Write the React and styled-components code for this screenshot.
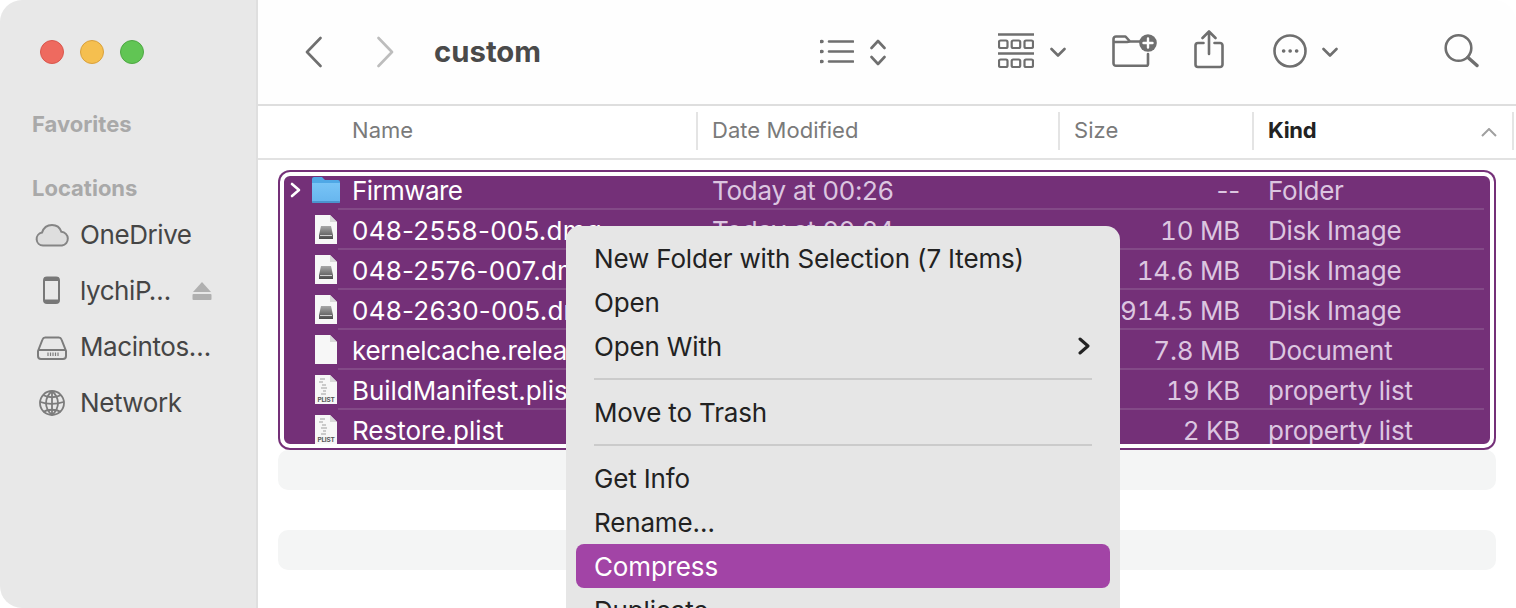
import React from "react";
import styled, { createGlobalStyle } from "styled-components";

const GlobalStyle = createGlobalStyle`
  html, body {
    margin: 0;
    padding: 0;
    background: #fff;
    overflow: hidden;
  }
  body {
    font-family: Inter, "Liberation Sans", sans-serif;
    -webkit-font-smoothing: antialiased;
  }
`;

const Window = styled.div`
  position: relative;
  display: flex;
  width: 1516px;
  height: 608px;
  overflow: hidden;
  border-radius: 22px;
  background: #fff;
`;

/* sidebar */
const Sidebar = styled.aside`
  flex: 0 0 258px;
  box-sizing: border-box;
  height: 100%;
  background: #e8e8e8;
  border-right: 2px solid #dfdfdf;
`;
const Lights = styled.div`
  display: flex;
  gap: 16px;
  padding: 40px 0 0 40px;
`;
const Light = styled.span`
  box-sizing: border-box;
  width: 24px;
  height: 24px;
  border-radius: 50%;
  background: ${(p) => p.$color};
  border: 1px solid ${(p) => p.$edge};
`;
const SectionLabel = styled.div`
  height: 28px;
  line-height: 28px;
  margin: ${(p) => p.$top}px 0 0 32px;
  font-size: 22px;
  font-weight: 700;
  color: #a9a9a9;
`;
const SideList = styled.div`
  margin-top: 5px;
`;
const SideItem = styled.div`
  display: flex;
  align-items: center;
  height: 56px;
  padding-left: 34px;
  font-size: 26px;
  letter-spacing: -0.42px;
  color: #454545;
`;
const SideIcon = styled.svg`
  flex: 0 0 36px;
  width: 36px;
  height: 32px;
  margin-right: 10px;
`;
const SideText = styled.span`
  flex: 0 0 112px;
  margin-bottom: 2px;
`;

/* main column */
const Main = styled.main`
  flex: 1;
  min-width: 0;
  display: flex;
  flex-direction: column;
`;
const Toolbar = styled.header`
  flex: 0 0 104px;
  display: flex;
  align-items: center;
  padding-left: 47px;
  background: #fefefe;
  border-bottom: 2px solid #dedede;
`;
const Title = styled.h1`
  flex: 0 0 386px;
  margin: 0 0 2px 40px;
  font-size: 29.3px;
  font-weight: 700;
  color: #4a4a4a;
`;
const ToolIcon = styled.svg`
  flex: 0 0 auto;
  height: 44px;
  margin-left: ${(p) => p.$gap || 0}px;
  fill: none;
  stroke: ${(p) => p.$color || "#6f6f6f"};
  stroke-width: 2.6;
  stroke-linecap: round;
  stroke-linejoin: round;
`;

const ColumnHeader = styled.div`
  flex: 0 0 50px;
  display: grid;
  grid-template-columns: 440px 362px 194px 260px 2px;
  align-items: center;
  padding-bottom: 2px;
  border-bottom: 2px solid #e2e2e2;
`;
const HeaderCell = styled.div`
  box-sizing: border-box;
  display: flex;
  align-items: center;
  justify-content: space-between;
  height: 38px;
  padding: 0 15px 2px ${(p) => (p.$first ? 94 : 14)}px;
  border-right: 2px solid #e4e4e4;
  font-size: 22px;
  font-weight: ${(p) => (p.$active ? 700 : 400)};
  letter-spacing: ${(p) => (p.$active ? "-0.3px" : "0.05px")};
  color: ${(p) => (p.$active ? "#222" : "#7a7a7a")};
`;
const HeaderEnd = styled.div`
  height: 38px;
`;
const SortArrow = styled.svg`
  width: 16px;
  height: 9px;
  margin-top: 4px;
  fill: none;
  stroke: #a0a0a0;
  stroke-width: 2;
`;

/* file list */
const List = styled.section`
  flex: 1;
  min-height: 0;
  padding: 10px 20px 0;
`;
const Selection = styled.div`
  position: relative;
  height: 280px;
  overflow: hidden;
  border-radius: 12px;
  background: #743078;
  &::after {
    content: "";
    position: absolute;
    inset: 0;
    border-radius: 12px;
    box-shadow: inset 0 0 0 2px #743078, inset 0 0 0 6px #fff;
    pointer-events: none;
  }
`;
const Row = styled.div`
  position: relative;
  display: grid;
  grid-template-columns: 34px 40px 360px 346px 182px 28px 1fr;
  align-items: center;
  height: 40px;
  font-size: 26px;
  letter-spacing: -0.25px;
  white-space: nowrap;
  &:not(:last-child)::after {
    content: "";
    position: absolute;
    left: 60px;
    right: 12px;
    bottom: 0;
    height: 2px;
    background: #834a87;
  }
`;
const Disclosure = styled.svg`
  justify-self: center;
  width: 12px;
  height: 16px;
  margin-left: 1px;
  fill: none;
  stroke: #fff;
  stroke-width: 2.6;
  stroke-linecap: round;
  stroke-linejoin: round;
`;
const FileIcon = styled.svg`
  display: block;
  width: 28px;
  height: 30px;
  margin-top: -2px;
`;
const Name = styled.span`
  color: #fff;
  letter-spacing: ${(p) => p.$track}px;
`;
const Meta = styled.span`
  color: #dcc6e0;
`;
const Size = styled(Meta)`
  text-align: right;
  font-variant-numeric: ${(p) => (p.$empty ? "normal" : "tabular-nums")};
`;
const Stripe = styled.div`
  height: 40px;
  border-radius: 10px;
  background: ${(p) => (p.$shaded ? "#f4f5f5" : "transparent")};
`;

/* context menu */
const Menu = styled.div`
  position: absolute;
  left: 566px;
  top: 226px;
  width: 554px;
  box-sizing: border-box;
  padding: 10px 10px 20px;
  border-radius: 14px 14px 0 0;
  background: #e6e6e6;
`;
const MenuItem = styled.div`
  display: flex;
  align-items: center;
  justify-content: space-between;
  height: 44px;
  padding: 0 20px 0 18px;
  border-radius: 8px;
  font-size: 26px;
  letter-spacing: -0.16px;
  color: ${(p) => (p.$active ? "#fff" : "#222")};
  background: ${(p) => (p.$active ? "#a244a6" : "transparent")};
`;
const MenuSeparator = styled.div`
  height: 2px;
  margin: 10px 18px;
  background: #cbcbcb;
`;
const Submenu = styled.svg`
  width: 12px;
  height: 18px;
  fill: none;
  stroke: #222;
  stroke-width: 3;
  stroke-linecap: round;
  stroke-linejoin: round;
`;

const FolderIcon = () => (
  <FileIcon viewBox="0 0 28 30">
    <defs>
      <linearGradient id="folder" x1="0" y1="0" x2="0" y2="1">
        <stop offset="0" stopColor="#78c4f6" />
        <stop offset="1" stopColor="#66b5ee" />
      </linearGradient>
    </defs>
    <path d="M0 5a2 2 0 0 1 2-2h8l3 3h13a2 2 0 0 1 2 2v4H0z" fill="#4fa8e6" />
    <path d="M0 9h28v18a2 2 0 0 1-2 2H2a2 2 0 0 1-2-2z" fill="url(#folder)" />
    <rect x="0" y="27" width="28" height="2" rx="1" fill="#4b94cf" />
  </FileIcon>
);

const Page = ({ children }) => (
  <FileIcon viewBox="0 0 28 30">
    <path d="M3 1h15l7 7v22H3z" fill="#f7f7f7" />
    <path d="M18 1v7h7z" fill="#d9d9d9" />
    {children}
  </FileIcon>
);

const DiskIcon = () => (
  <Page>
    <defs>
      <linearGradient id="disk" x1="0" y1="0" x2="0" y2="1">
        <stop offset="0" stopColor="#a8a8a8" />
        <stop offset="1" stopColor="#4b4b4b" />
      </linearGradient>
    </defs>
    <path d="M9 12h10l2 9v4H7v-4z" fill="url(#disk)" />
    <rect x="8" y="21" width="12" height="1" fill="#d0d0d0" />
  </Page>
);

const PlistIcon = () => (
  <Page>
    <path d="M8 5h5M7 8h4M10 11h4M9 14h6M11 17h3M9 20h5" stroke="#bdbdbd" strokeWidth="1.4" />
    <text x="14" y="28" textAnchor="middle" fontSize="6.5" fontWeight="700" fill="#555" fontFamily="Inter, sans-serif">
      PLIST
    </text>
  </Page>
);

const rows = [
  { name: "Firmware", track: -0.6, date: "Today at 00:26", size: "--", kind: "Folder", icon: <FolderIcon />, open: true },
  { name: "048-2558-005.dmg", track: 0.25, date: "Today at 00:24", size: "10 MB", kind: "Disk Image", icon: <DiskIcon /> },
  { name: "048-2576-007.dmg", track: 0.25, date: "Today at 00:24", size: "14.6 MB", kind: "Disk Image", icon: <DiskIcon /> },
  { name: "048-2630-005.dmg", track: 0.25, date: "Today at 00:24", size: "914.5 MB", kind: "Disk Image", icon: <DiskIcon /> },
  { name: "kernelcache.release", track: -0.25, date: "Today at 00:24", size: "7.8 MB", kind: "Document", icon: <Page /> },
  { name: "BuildManifest.plist", track: -0.05, date: "Today at 00:24", size: "19 KB", kind: "property list", icon: <PlistIcon /> },
  { name: "Restore.plist", track: 0, date: "Today at 00:24", size: "2 KB", kind: "property list", icon: <PlistIcon /> },
];

const App = () => {
  return (
    <>
      <GlobalStyle />
      <Window>
        <Sidebar>
          <Lights>
            <Light $color="#ee6a5f" $edge="#d9574d" />
            <Light $color="#f5bf4f" $edge="#d9a13d" />
            <Light $color="#61c554" $edge="#4ea843" />
          </Lights>
          <SectionLabel $top={46}>Favorites</SectionLabel>
          <SectionLabel $top={36}>Locations</SectionLabel>
          <SideList>
            <SideItem>
              <SideIcon viewBox="0 0 36 32">
                <path
                  d="M9 26.500a6.500 6.500 0 0 1-1-12.900C9.500 9 13.500 6 18 6c4.500 0 8 2.800 9.400 6.800A6.900 6.900 0 0 1 28 26.500z"
                  fill="#dedede"
                  stroke="#858585"
                  strokeWidth="2"
                />
              </SideIcon>
              <SideText>OneDrive</SideText>
            </SideItem>
            <SideItem>
              <SideIcon viewBox="0 0 36 32">
                <rect x="10" y="2.500" width="15" height="25.500" rx="3" fill="none" stroke="#787878" strokeWidth="2" />
                <rect x="10" y="2.500" width="15" height="3.500" fill="#787878" />
                <rect x="10" y="24.500" width="15" height="3.500" fill="#787878" />
              </SideIcon>
              <SideText>lychiP…</SideText>
              <svg width="20" height="18" viewBox="0 0 20 18" fill="#b0b0b0">
                <path d="M10 0 19 10H1z" />
                <rect x="0.500" y="12" width="19" height="6" rx="1" />
              </svg>
            </SideItem>
            <SideItem>
              <SideIcon viewBox="0 0 36 32">
                <path
                  d="M4 20 8.500 8.500A3 3 0 0 1 11.500 6.500h13a3 3 0 0 1 3 2L32 20v5a3 3 0 0 1-3 3H7a3 3 0 0 1-3-3zM4 19h28"
                  fill="none"
                  stroke="#7c7c7c"
                  strokeWidth="2"
                />
                <path d="M14 21.500v3.500M16.500 21.500v3.500M19 21.500v3.500M21.500 21.500v3.500M24 21.500v3.500" stroke="#7c7c7c" strokeWidth="1.200" />
              </SideIcon>
              <SideText>Macintos…</SideText>
            </SideItem>
            <SideItem>
              <SideIcon viewBox="0 0 36 32">
                <g fill="none" stroke="#7c7c7c" strokeWidth="1.800">
                  <circle cx="18" cy="16" r="12" />
                  <path d="M9 8c5 3 13 3 18 0M6.500 15c6 2.500 16 2.500 23 0M9 25c5-3 13-3 18 0" />
                  <path d="M18 4c-8 7-8 17 0 24M18 4c8 7 8 17 0 24M18 4v24" />
                </g>
              </SideIcon>
              <SideText>Network</SideText>
            </SideItem>
          </SideList>
        </Sidebar>

        <Main>
          <Toolbar>
            <ToolIcon width="17" viewBox="0 0 17 44">
              <path d="M15.500 8 2 22l13.500 14" />
            </ToolIcon>
            <ToolIcon width="17" viewBox="0 0 17 44" $gap={55} $color="#bdbdbd">
              <path d="M1.500 8 15 22 1.500 36" />
            </ToolIcon>
            <Title>custom</Title>
            <ToolIcon width="34" viewBox="0 0 34 44">
              <path d="M9 11.500h24M9 21.500h24M9 31.500h24" />
              <path d="M1.500 11.500h.5M1.500 21.500h.5M1.500 31.500h.5" strokeWidth="3.600" />
            </ToolIcon>
            <ToolIcon width="16" viewBox="0 0 16 44" $gap={16}>
              <path d="M1.500 18 8 11l6.500 7M1.500 27 8 34l6.500-7" />
            </ToolIcon>
            <ToolIcon width="36" viewBox="0 0 36 44" $gap={112}>
              <path d="M0 4.500h36M0 23.500h36" />
              <g strokeWidth="2.200">
                <rect x="1" y="10.500" width="8.500" height="7.500" rx="1.500" />
                <rect x="13.700" y="10.500" width="8.500" height="7.500" rx="1.500" />
                <rect x="26.500" y="10.500" width="8.500" height="7.500" rx="1.500" />
                <rect x="1" y="29.500" width="8.500" height="7.500" rx="1.500" />
                <rect x="13.700" y="29.500" width="8.500" height="7.500" rx="1.500" />
                <rect x="26.500" y="29.500" width="8.500" height="7.500" rx="1.500" />
              </g>
            </ToolIcon>
            <ToolIcon width="16" viewBox="0 0 16 44" $gap={16}>
              <path d="M1.500 19 8 25.500 14.500 19" />
            </ToolIcon>
            <ToolIcon width="46" viewBox="0 0 46 44" $gap={46}>
              <path d="M1.500 20V9a2.500 2.500 0 0 1 2.500-2.500h9.500l4.500 5h10M1.500 12h13.500l3-.5M36 24v10a1.800 1.800 0 0 1-1.800 1.800H4a2.500 2.500 0 0 1-2.500-2.500V20" />
              <circle cx="36" cy="13" r="8.800" fill="#6f6f6f" stroke="none" />
              <path d="M36 8.500v9M31.500 13h9" stroke="#fff" strokeWidth="2.400" />
            </ToolIcon>
            <ToolIcon width="30" viewBox="0 0 30 44" $gap={36}>
              <path d="M9.500 13H4a2.500 2.500 0 0 0-2.500 2.500v19A2.500 2.500 0 0 0 4 37h22a2.500 2.500 0 0 0 2.500-2.500v-19A2.500 2.500 0 0 0 26 13h-5.500" />
              <path d="M15 24V2.500M8.500 8 15 1.500 21.500 8" />
            </ToolIcon>
            <ToolIcon width="34" viewBox="0 0 34 44" $gap={49}>
              <circle cx="17" cy="21" r="15.500" />
              <path d="M10.500 21h.3M17 21h.3M23.500 21h.3" strokeWidth="3.400" />
            </ToolIcon>
            <ToolIcon width="16" viewBox="0 0 16 44" $gap={15}>
              <path d="M1.500 19 8 25.500 14.500 19" />
            </ToolIcon>
            <ToolIcon width="35" viewBox="0 0 35 44" $gap={106}>
              <circle cx="14.500" cy="18" r="12.800" />
              <path d="M24 27.500 33 35.500" strokeWidth="3.400" />
            </ToolIcon>
          </Toolbar>

          <ColumnHeader>
            <HeaderCell $first>Name</HeaderCell>
            <HeaderCell>Date Modified</HeaderCell>
            <HeaderCell>Size</HeaderCell>
            <HeaderCell $active>
              Kind
              <SortArrow viewBox="0 0 16 9">
                <path d="M1 8 8 1l7 7" />
              </SortArrow>
            </HeaderCell>
            <HeaderEnd />
          </ColumnHeader>

          <List>
            <Selection>
              {rows.map((row) => (
                <Row key={row.name}>
                  {row.open ? (
                    <Disclosure viewBox="0 0 12 16">
                      <path d="M2 2l7 6-7 6" />
                    </Disclosure>
                  ) : (
                    <span />
                  )}
                  {row.icon}
                  <Name $track={row.track}>{row.name}</Name>
                  <Meta>{row.date}</Meta>
                  <Size $empty={row.size === "--"}>{row.size}</Size>
                  <span />
                  <Meta>{row.kind}</Meta>
                </Row>
              ))}
            </Selection>
            <Stripe $shaded />
            <Stripe />
            <Stripe $shaded />
          </List>
        </Main>

        <Menu>
          <MenuItem>New Folder with Selection (7 Items)</MenuItem>
          <MenuItem>Open</MenuItem>
          <MenuItem>
            Open With
            <Submenu viewBox="0 0 12 18">
              <path d="M2 2l8 7-8 7" />
            </Submenu>
          </MenuItem>
          <MenuSeparator />
          <MenuItem>Move to Trash</MenuItem>
          <MenuSeparator />
          <MenuItem>Get Info</MenuItem>
          <MenuItem>Rename…</MenuItem>
          <MenuItem $active>Compress</MenuItem>
          <MenuItem>Duplicate</MenuItem>
        </Menu>
      </Window>
    </>
  );
};

export default App;
